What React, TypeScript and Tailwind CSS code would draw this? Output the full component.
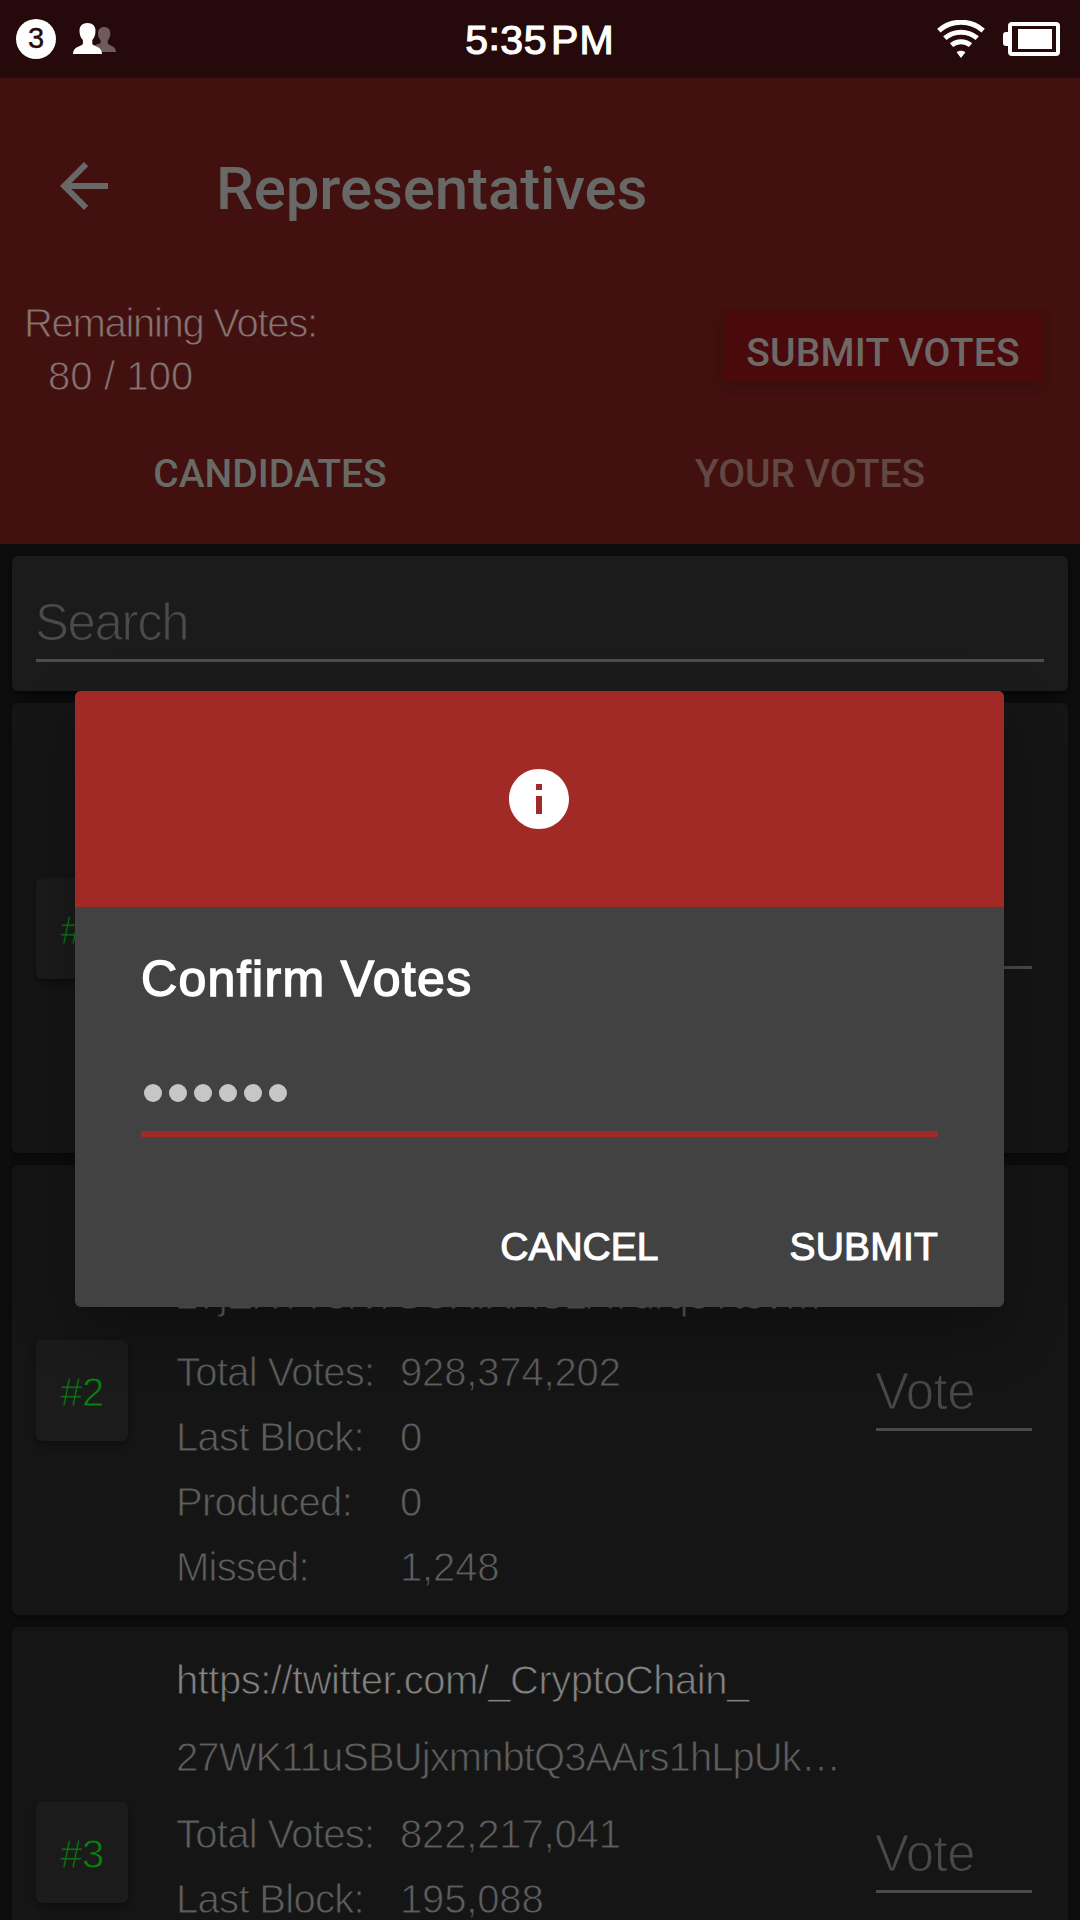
import { MdArrowBack, MdInfo } from "react-icons/md";

type Candidate = {
  rank: string;
  url?: string;
  address?: string;
  stats: [string, string][];
};

const candidates: Candidate[] = [
  { rank: "#1", stats: [] },
  {
    rank: "#2",
    address: "27jEXTT8KTSUXfXAC2ATdrqeTtov…",
    stats: [
      ["Total Votes:", "928,374,202"],
      ["Last Block:", "0"],
      ["Produced:", "0"],
      ["Missed:", "1,248"],
    ],
  },
  {
    rank: "#3",
    url: "https://twitter.com/_CryptoChain_",
    address: "27WK11uSBUjxmnbtQ3AArs1hLpUk…",
    stats: [
      ["Total Votes:", "822,217,041"],
      ["Last Block:", "195,088"],
    ],
  },
];

function UsersIcon() {
  return (
    <svg viewBox="0 0 43 32" className="h-8 w-[43px]">
      <path
        fill="#6f5b5c"
        d="M31 4c4 0 6.4 2.6 6.4 6.6 0 3.2-1.4 5.4-2.6 7v3.2c2 2 8.2 2.2 8.2 8.2H22v-7l5.600-1.800v-3c-1.400-1.400-2.600-3.800-2.600-6.800C25 6.600 27.400 4 31 4z"
      />
      <path
        fill="#ffffff"
        d="M14.500 0c5 0 8 2.800 8 7.800 0 4.200-1.200 7.200-3.200 9.200v4c2.400 2.600 9.700 2.800 9.700 10H0c0-7.200 7.600-7.400 9.900-10v-4C7.800 15 6.500 12 6.500 7.800 6.500 2.800 9.500 0 14.500 0z"
      />
    </svg>
  );
}

function WifiIcon() {
  return (
    <svg viewBox="0 0 48 38" className="h-[38px] w-12" fill="none" stroke="#ffffff" strokeWidth="5">
      <path d="M1.800 10.600C14.500-0.600 33.500-0.600 46.200 10.600" />
      <path d="M7.800 18.200C17 10.200 31 10.200 40.200 18.200" />
      <path d="M14.500 25.200C20 20.600 28 20.600 33.500 25.200" />
      <path d="M24 38l-4.400-5.800c2.400-2 6.400-2 8.800 0z" fill="#ffffff" stroke="none" />
    </svg>
  );
}

function BatteryIcon() {
  return (
    <div className="flex items-center">
      <div className="h-[14px] w-[5px] rounded-l-[3px] bg-white" />
      <div className="h-[34px] w-[52px] rounded-[4px] border-4 border-white p-[3px] pl-[6px]">
        <div className="mr-px h-[20px] bg-white" />
      </div>
    </div>
  );
}

function StatusBar() {
  return (
    <div className="grid h-[78px] grid-cols-3 items-center bg-[#25090b] pb-px text-white">
      <div className="flex items-center pl-4">
        <div className="flex size-10 items-center justify-center rounded-full bg-white text-[29px] leading-none text-[#25090b] [-webkit-text-stroke:0.400px_#25090b]">
          3
        </div>
        <div className="ml-[17px]">
          <UsersIcon />
        </div>
      </div>
      <div className="flex justify-center gap-1 pt-[2px] text-[41px] leading-[60px] [-webkit-text-stroke:1.200px_#ffffff]">
        <span className="tracking-[0.500px]">
          5<span className="relative -top-[4px]">:</span>35
        </span>
        <span className="tracking-[1.200px]">PM</span>
      </div>
      <div className="flex items-center justify-end gap-[18px] pr-5">
        <WifiIcon />
        <BatteryIcon />
      </div>
    </div>
  );
}

function Header() {
  return (
    <header className="h-[466px] bg-[#41100f] pt-[72px]">
      <div className="flex h-[72px] pl-12">
        <MdArrowBack className="size-[72px] text-[#686866]" />
        <h1 className="mt-[3px] ml-24 font-['Roboto',sans-serif] text-[60px] leading-[72px] font-medium tracking-[-0.100px] text-[#686866]">
          Representatives
        </h1>
      </div>
      <div className="mt-[74px] flex justify-between pr-[37px] pl-6">
        <div className="pt-px text-[40px] leading-[53px] text-[#867472] [-webkit-text-stroke:0.900px_#41100f]">
          <div className="tracking-[-1.300px]">Remaining Votes:</div>
          <div className="pl-6 tracking-[0.100px]">80 / 100</div>
        </div>
        <button className="mt-4 flex h-[70px] w-[320px] items-center justify-center rounded-[3px] bg-[#4a0a0c] pt-[11px] font-['Roboto',sans-serif] text-[39px] leading-[60px] font-medium tracking-[0.200px] text-[#6e6967] shadow-[0_4px_8px_rgba(40,18,12,0.500)]">
          SUBMIT VOTES
        </button>
      </div>
      <div className="mt-[41px] grid grid-cols-2 text-center font-['Roboto',sans-serif] text-[39px] leading-[60px] font-medium">
        <div className="text-[#686a66]">CANDIDATES</div>
        <div className="text-[#624743]">YOUR VOTES</div>
      </div>
    </header>
  );
}

function SearchCard() {
  return (
    <div className="h-[135px] rounded-[6px] bg-[#1b1b1b] px-6 pt-[37px] shadow-[0_3px_6px_rgba(0,0,0,0.600)]">
      <div className="h-[69px] border-b-[3px] border-[#4d4d4d] text-[51px] leading-[60px] tracking-[-1.400px] text-[#4a4a4a] [-webkit-text-stroke:1.200px_#1b1b1b]">
        <span className="-ml-px">Search</span>
      </div>
    </div>
  );
}

function CandidateCard({ c }: { c: Candidate }) {
  return (
    <div className="flex h-[450px] shrink-0 rounded-[6px] bg-[#151515] pr-9 pl-6 shadow-[0_2px_5px_rgba(0,0,0,0.350)]">
      <div className="mt-[175px] flex h-[101px] w-[92px] items-center justify-center rounded-[6px] bg-[#1b1b1b] pt-[3px] text-[40px] tracking-[-0.500px] text-[#088410] shadow-[0_4px_7px_rgba(0,0,0,0.350)] [-webkit-text-stroke:0.900px_#1b1b1b]">
        {c.rank}
      </div>
      <div className="ml-[48px] w-[700px] pt-[15px] text-[40px] tracking-[-0.700px] whitespace-nowrap text-[#5e5e5e] [-webkit-text-stroke:0.900px_#151515]">
        <div className="h-[77px] leading-[77px] tracking-[-0.500px] text-[#828282]">{c.url}</div>
        <div className="mb-[6px] h-[77px] leading-[77px] tracking-[-0.920px]">{c.address}</div>
        {c.stats.map(([label, value]) => (
          <div key={label} className="flex h-[65px] leading-[65px]">
            <div className="w-[224px]">{label}</div>
            <div className="tracking-[-0.150px]">{value}</div>
          </div>
        ))}
      </div>
      <div className="mt-[197px] h-[69px] w-[156px] border-b-[3px] border-[#4a4a4a] text-[51px] leading-[60px] tracking-[-0.500px] text-[#484848] [-webkit-text-stroke:1.200px_#151515]">
        <span className="-ml-px">Vote</span>
      </div>
    </div>
  );
}

function ConfirmDialog() {
  return (
    <div className="absolute top-[691px] left-[75px] h-[616px] w-[929px] rounded-[6px] bg-[#424242] shadow-[0_24px_60px_rgba(0,0,0,0.300)]">
      <div className="flex h-[216px] items-center justify-center rounded-t-[6px] bg-[#a12a26] pr-[2px]">
        <MdInfo className="size-[72px] text-white" />
      </div>
      <div className="px-[66px] pt-[42px] text-white">
        <h2 className="text-[50px] leading-[60px] tracking-[1.350px] [-webkit-text-stroke:1.500px_#ffffff]">
          Confirm Votes
        </h2>
        <div className="mt-[75px] flex h-[53px] gap-[7px] border-b-6 border-[#a12a26] pl-[3px]">
          {[0, 1, 2, 3, 4, 5].map((i) => (
            <span key={i} className="size-[18px] rounded-full bg-[#c6c6c6]" />
          ))}
        </div>
        <div className="mt-[90px] flex justify-end gap-[131px] text-[39px] leading-[40px] [-webkit-text-stroke:1.100px_#ffffff]">
          <button>CANCEL</button>
          <button className="tracking-[0.200px]">SUBMIT</button>
        </div>
      </div>
    </div>
  );
}

export default function App() {
  return (
    <div className="relative h-[1920px] w-[1080px] overflow-hidden bg-[#0d0d0d] font-['Liberation_Sans',sans-serif]">
      <StatusBar />
      <Header />
      <main className="flex flex-col gap-3 p-3">
        <SearchCard />
        {candidates.map((c) => (
          <CandidateCard key={c.rank} c={c} />
        ))}
      </main>
      <ConfirmDialog />
    </div>
  );
}
